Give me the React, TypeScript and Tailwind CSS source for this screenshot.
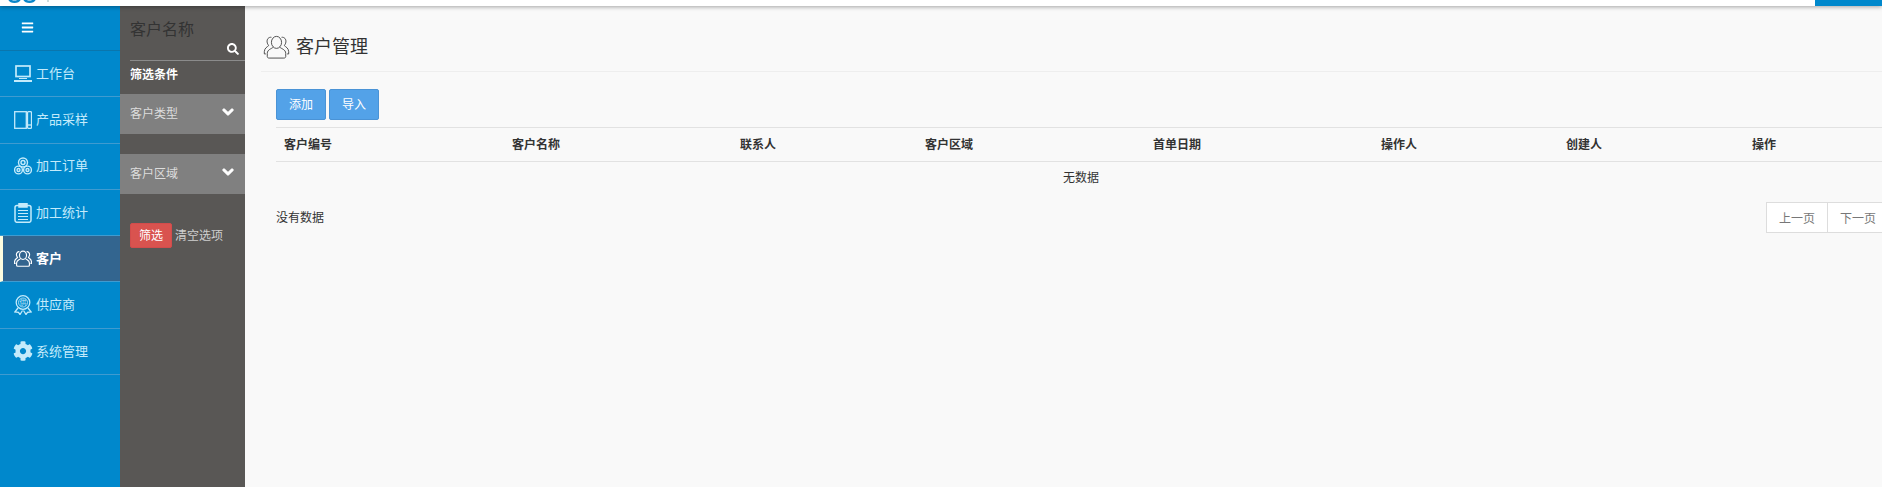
import React from 'react';
import { FaBars, FaSearch, FaChevronDown, FaCog } from 'react-icons/fa';

const UsersIcon: React.FC<{ className?: string; stroke?: number }> = ({ className, stroke = 1.3 }) => (
  <svg viewBox="0 0 28 26" fill="none" stroke="currentColor" strokeWidth={stroke} className={className}>
    <ellipse cx="14" cy="8" rx="5.500" ry="6.500" />
    <path d="M10.500 13 C9 15 4 15.500 4 20 V23.500 C4 24.500 5 25 6 25 H22 C23 25 24 24.500 24 23.500 V20 C24 15.500 19 15 17.500 13" />
    <path d="M8.500 2.500 C5.500 2 3.500 4.500 3.800 7.500 C4 9.500 5 10.500 5.500 11.500 C4 13 1 14 .8 18 V20.500 H2.500" />
    <path d="M19.500 2.500 C22.500 2 24.500 4.500 24.200 7.500 C24 9.500 23 10.500 22.500 11.500 C24 13 27 14 27.200 18 V20.500 H25.500" />
  </svg>
);

const LaptopIcon: React.FC = () => (
  <svg viewBox="0 0 18 17" fill="none" stroke="currentColor" strokeWidth="1.700" className="h-[17px] w-[18px]">
    <rect x="2" y="1" width="14" height="10.500" />
    <path d="M0 16 H18" strokeWidth="2" />
    <path d="M5 13.500 H13" strokeWidth="1" />
  </svg>
);

const BookIcon: React.FC = () => (
  <svg viewBox="0 0 18 18" fill="none" stroke="currentColor" strokeWidth="1.300" className="h-[18px] w-[18px]">
    <rect x=".7" y=".7" width="11.600" height="16.600" />
    <rect x="13.500" y=".7" width="4" height="16.600" rx="1" />
    <path d="M13.500 14 H17.500" />
  </svg>
);

const RollsIcon: React.FC = () => (
  <svg viewBox="0 0 18 18" fill="none" stroke="currentColor" strokeWidth="1.400" className="h-[18px] w-[18px]">
    <circle cx="9" cy="5.500" r="4.500" />
    <circle cx="9" cy="5.500" r="2" />
    <circle cx="4.500" cy="13" r="3.900" />
    <circle cx="4.500" cy="13" r="1.500" />
    <circle cx="13.500" cy="13" r="3.900" />
    <circle cx="13.500" cy="13" r="1.500" />
  </svg>
);

const ClipboardIcon: React.FC = () => (
  <svg viewBox="0 0 18 20" fill="none" stroke="currentColor" strokeWidth="1.500" className="h-[20px] w-[18px]">
    <rect x="1" y="2.500" width="16" height="16.800" rx="2" />
    <rect x="5" y=".5" width="8" height="3.500" fill="currentColor" />
    <path d="M4 7.500 H14 M4 10.500 H14 M4 13.500 H14 M4 16.500 H14" strokeWidth="1.200" />
  </svg>
);

const BadgeIcon: React.FC = () => (
  <svg viewBox="0 0 18 20" fill="none" stroke="currentColor" strokeWidth="1.300" className="h-[20px] w-[18px]">
    <circle cx="9" cy="7.500" r="6.800" />
    <circle cx="9" cy="7.500" r="4.500" strokeWidth=".8" />
    <text x="9" y="10" textAnchor="middle" fontSize="7" fill="currentColor" stroke="none">
      供
    </text>
    <path d="M4 13 L.8 17 L4.500 17.300 L6 19.500 L8.500 15.500 M14 13 L17.200 17 L13.500 17.300 L12 19.500 L9.500 15.500" />
  </svg>
);

const navItems = [
  { label: '工作台', icon: <LaptopIcon /> },
  { label: '产品采样', icon: <BookIcon /> },
  { label: '加工订单', icon: <RollsIcon /> },
  { label: '加工统计', icon: <ClipboardIcon /> },
  { label: '客户', icon: <UsersIcon className="h-[17px] w-[18px]" stroke={1.800} />, active: true },
  { label: '供应商', icon: <BadgeIcon /> },
  { label: '系统管理', icon: <FaCog className="h-[20px] w-[20px] shrink-0" /> },
];

const columns = [
  { label: '客户编号', width: 'w-[228px]' },
  { label: '客户名称', width: 'w-[228px]' },
  { label: '联系人', width: 'w-[185px]' },
  { label: '客户区域', width: 'w-[228px]' },
  { label: '首单日期', width: 'w-[228px]' },
  { label: '操作人', width: 'w-[185px]' },
  { label: '创建人', width: 'w-[186px]' },
  { label: '操作', width: 'flex-1' },
];

export default function App() {
  return (
    <div className="h-[487px] w-[1882px] overflow-hidden bg-[#f9f9f9] font-['Noto_Sans_CJK_SC','Liberation_Sans',sans-serif] text-[12px] text-[#333]">
      {/* top bar, mostly scrolled off */}
      <div className="relative z-10 flex h-[6px] items-start justify-between overflow-hidden bg-white shadow-[0_1px_4px_rgba(0,0,0,0.35)]">
        <svg viewBox="0 0 50 6" className="h-[6px] w-[50px]" fill="none" stroke="#0b86c9" strokeWidth="2.500">
          <path d="M9 -2 C10 3 19 3 20 -2" />
          <path d="M24 -2 C25 3 34 3 35 -2" />
          <path d="M48 -1 V2" stroke="#9bb" strokeWidth="1" />
        </svg>
        <div className="h-[6px] w-[67px] bg-[#0088cc]" />
      </div>

      <div className="flex h-[481px]">
        {/* main menu */}
        <nav className="w-[120px] shrink-0 bg-[#0088cc] text-[#c4ebfb]">
          <div className="flex h-[45px] items-center border-b border-[#0a76ad] pb-[2px] pl-[21px] text-white">
            <FaBars className="h-[13px] w-[13px]" />
          </div>
          {navItems.map((item) => (
            <div
              key={item.label}
              className={
                item.active
                  ? 'flex h-[46.300px] items-center gap-[4px] border-b border-[#3f9bd0] border-l-[3px] border-l-[#fdfde0] bg-[#33658f] pl-[11px] font-bold text-white'
                  : 'flex h-[46.300px] items-center gap-[4px] border-b border-[#3f9bd0] pl-[14px]'
              }
            >
              <span className="flex w-[18px] items-center justify-center">{item.icon}</span>
              <span className="whitespace-nowrap pb-[2px] text-[13px]">{item.label}</span>
            </div>
          ))}
        </nav>

        {/* filter panel */}
        <aside className="w-[125px] shrink-0 bg-[#595755] text-[#ddd]">
          <div className="relative ml-[10px] h-[55px] border-b border-[#8b8b8b] pt-[10px] text-[16px] leading-[24px] text-[#333]">
            客户名称
            <FaSearch className="absolute right-[6px] top-[37px] h-[12px] w-[12px] text-white" />
          </div>
          <div className="flex h-[33px] items-center pb-[7px] pl-[10px] font-bold text-white">筛选条件</div>
          <div className="flex h-[40px] items-center justify-between bg-[#808080] pb-[2px] pl-[10px] pr-[11px]">
            <span>客户类型</span>
            <FaChevronDown className="mb-[2px] h-[12px] w-[12px] text-white" stroke="currentColor" strokeWidth={50} />
          </div>
          <div className="mt-[20px] flex h-[40px] items-center justify-between bg-[#808080] pb-[2px] pl-[10px] pr-[11px]">
            <span>客户区域</span>
            <FaChevronDown className="mb-[2px] h-[12px] w-[12px] text-white" stroke="currentColor" strokeWidth={50} />
          </div>
          <div className="mt-[29px] flex items-center pl-[10px]">
            <button className="h-[25px] w-[42px] rounded-[2px] border border-[#d24c4c] bg-[#d9534f] pb-[2px] text-white">筛选</button>
            <span className="ml-[3px] pb-[2px] text-[12px] text-[#cfcfcf]">清空选项</span>
          </div>
        </aside>

        {/* content */}
        <main className="min-w-0 flex-1 pl-[16px]">
          <div className="flex h-[66px] items-end gap-[6px] border-b border-[#eeeeee] pb-[12px] pl-[2px]">
            <UsersIcon className="h-[24px] w-[27px] text-[#444]" stroke={1} />
            <h1 className="text-[18px] font-normal text-[#333]">客户管理</h1>
          </div>
          <div className="pl-[15px]">
            <div className="mt-[17px] flex gap-[3px]">
              <button className="h-[31px] w-[50px] rounded-[2px] border border-[#4a93d6] bg-[#53a2e8] pb-[2px] text-white">添加</button>
              <button className="h-[31px] w-[50px] rounded-[2px] border border-[#4a93d6] bg-[#53a2e8] pb-[2px] text-white">导入</button>
            </div>
            <div className="mt-[7px] flex h-[35px] items-center border-y border-[#e2e2e2] pb-[2px] font-bold">
              {columns.map((col) => (
                <div key={col.label} className={`${col.width} shrink-0 pl-[8px]`}>
                  {col.label}
                </div>
              ))}
            </div>
            <div className="flex h-[32px] items-center justify-center pb-[2px] pl-[4px]">无数据</div>
            <div className="mt-[8px] flex items-start justify-between">
              <span className="pt-[6px]">没有数据</span>
              <div className="flex h-[31px] border border-r-0 border-[#dddddd] bg-white text-[#777]">
                <span className="flex w-[61px] items-center justify-center border-r border-[#dddddd]">上一页</span>
                <span className="flex w-[54px] items-center pl-[12px]">下一页</span>
              </div>
            </div>
          </div>
        </main>
      </div>
    </div>
  );
}
